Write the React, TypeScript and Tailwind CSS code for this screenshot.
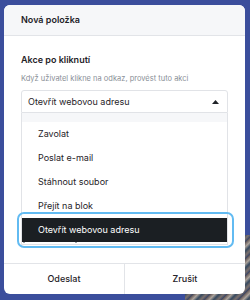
import React from "react";

export default function App() {
  const items = ["Zavolat", "Poslat e-mail", "Stáhnout soubor", "Přejít na blok"];
  return (
    <div
      className="relative w-[250px] h-[300px] overflow-hidden bg-[#3b4e9c] pt-[5px] pl-[4px]"
      style={{ fontFamily: "Inter, 'Noto Sans', sans-serif" }}
    >
      <div className="absolute left-[185px] top-[235px] w-[70px] h-[70px] bg-[repeating-linear-gradient(135deg,#6b5a48_0px,#c9b89a_3px,#34474f_6px,#8e7b62_9px,#2e3c55_12px)] opacity-80" />
      <div className="relative w-[241px] h-[289px] rounded-[6px] bg-white flex flex-col overflow-hidden">
        <div className="h-[31px] shrink-0 bg-[#f6f7f9] border-b border-[#e2e4e8] px-[17px] flex items-center text-[9px] font-semibold text-[#1f2328]">
          Nová položka
        </div>
        <div className="flex-1 px-[17px] pt-[18px]">
          <div className="text-[9px] leading-[12px] font-semibold text-[#1f2328]">Akce po kliknutí</div>
          <div className="mt-[7px] text-[7.5px] leading-[11px] text-[#8a8f97]">
            Když uživatel klikne na odkaz, provést tuto akci
          </div>
          <div className="relative mt-[6px]">
            <div className="relative z-10 h-[23px] border border-[#e1e3e7] rounded-t-[3px] bg-white flex items-center justify-between pl-[6px] pr-[8px]">
              <span className="text-[9px] text-[#1f2328]">Otevřít webovou adresu</span>
              <svg width="7" height="4" viewBox="0 0 7 4">
                <path d="M0 4 L3.5 0 L7 4 Z" fill="#1f2328" />
              </svg>
            </div>
            <div className="h-[132px] overflow-hidden border-x border-b border-[#e1e3e7] bg-white">
              <div className="-mt-[15px]">
                <div className="h-[24px] bg-[#f6f7f9] flex items-center pl-[16px] text-[9px] text-[#6b7078]">
                  Otevřít stránku
                </div>
                {items.map((t) => (
                  <div key={t} className="h-[24px] flex items-center pl-[16px] text-[9px] text-[#1f2328]">
                    {t}
                  </div>
                ))}
                <div className="h-[24px] bg-[#1b1f23] flex items-center pl-[16px] text-[9px] text-white">
                  Otevřít webovou adresu
                </div>
                <div className="h-[3px] flex items-start">
                  <div className="ml-[1px] w-[2px] h-[1px] bg-[#9aa0a6]" />
                  <div className="ml-[50px] w-[2px] h-[1px] bg-[#9aa0a6]" />
                </div>
              </div>
            </div>
            <div className="absolute left-[-4px] top-[122px] w-[217px] h-[36px] border-2 border-[#62bbf2] rounded-[7px]" />
          </div>
        </div>
        <div className="h-[31px] shrink-0 border-t border-[#e2e4e8] flex text-[9px] font-medium text-[#1f2328]">
          <div className="w-[121px] flex items-center justify-center border-r border-[#e2e4e8]">Odeslat</div>
          <div className="flex-1 flex items-center justify-center">Zrušit</div>
        </div>
      </div>
    </div>
  );
}
